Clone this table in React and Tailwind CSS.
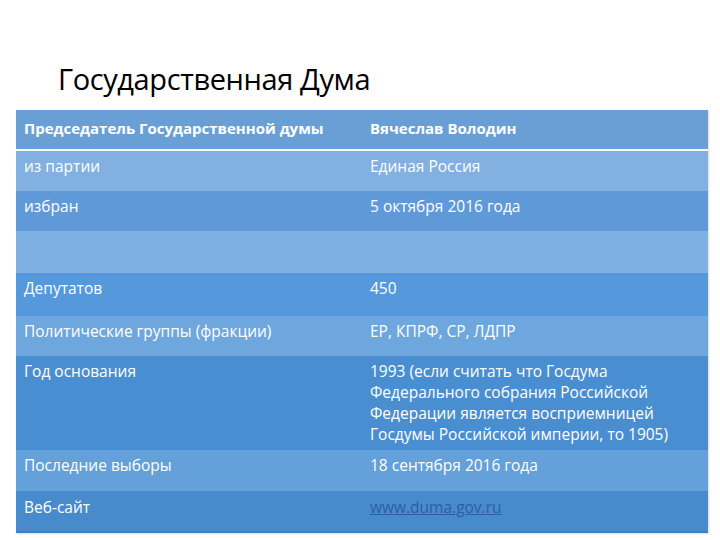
export default function App() {
    const rows = [
        { l: 'из партии', r: 'Единая Россия', h: 'h-[40px]', bg: 'bg-[#82b0e0]' },
        { l: 'избран', r: '5 октября 2016 года', h: 'h-[40px]', bg: 'bg-[#5f99d8]' },
        { l: '', r: '', h: 'h-[42px]', bg: 'bg-[#7eb0e3]' },
        { l: 'Депутатов', r: '450', h: 'h-[43px]', bg: 'bg-[#5598db]' },
        { l: 'Политические группы (фракции)', r: 'ЕР, КПРФ, СР, ЛДПР', h: 'h-[40px]', bg: 'bg-[#6ea7de]' },
        {
            l: 'Год основания',
            r: '1993 (если считать что Госдума Федерального собрания Российской Федерации является восприемницей Госдумы Российской империи, то 1905)',
            h: 'h-[94px]',
            bg: 'bg-[#4a8ed2]',
        },
        { l: 'Последние выборы', r: '18 сентября 2016 года', h: 'h-[41px]', bg: 'bg-[#64a0d9]' },
    ]

    return (
        <div className="w-[720px] h-[540px] bg-white overflow-hidden font-['Open_Sans','Noto_Sans',sans-serif]">
            <h1 className="h-[110px] pt-[61px] pl-[58px] text-[29px] leading-[36px] tracking-[-0.4px] text-black">
                Государственная Дума
            </h1>

            <div className="ml-[16px] w-[692px] text-white text-[15.5px] leading-[21px] shadow-[1px_1px_2px_rgba(0,0,0,0.15)]">
                <div className="flex h-[41px] pt-[8px] bg-[#6a9fd5] font-bold text-[15px] border-b-2 border-white">
                    <div className="w-[354px] pl-[8px]">Председатель Государственной думы</div>
                    <div className="flex-1">Вячеслав Володин</div>
                </div>

                {rows.map((row, i) => (
                    <div key={i} className={`flex pt-[5px] ${row.h} ${row.bg}`}>
                        <div className="w-[354px] pl-[8px]">{row.l}</div>
                        <div className="flex-1 pr-[30px]">{row.r}</div>
                    </div>
                ))}

                <div className="flex h-[42px] pt-[6px] bg-[#478bcc] border-b-2 border-[#3f7fc0]">
                    <div className="w-[354px] pl-[8px]">Веб-сайт</div>
                    <div className="flex-1">
                        <span className="text-[#2c5ea8] underline">www.duma.gov.ru</span>
                    </div>
                </div>
            </div>
        </div>
    )
}
